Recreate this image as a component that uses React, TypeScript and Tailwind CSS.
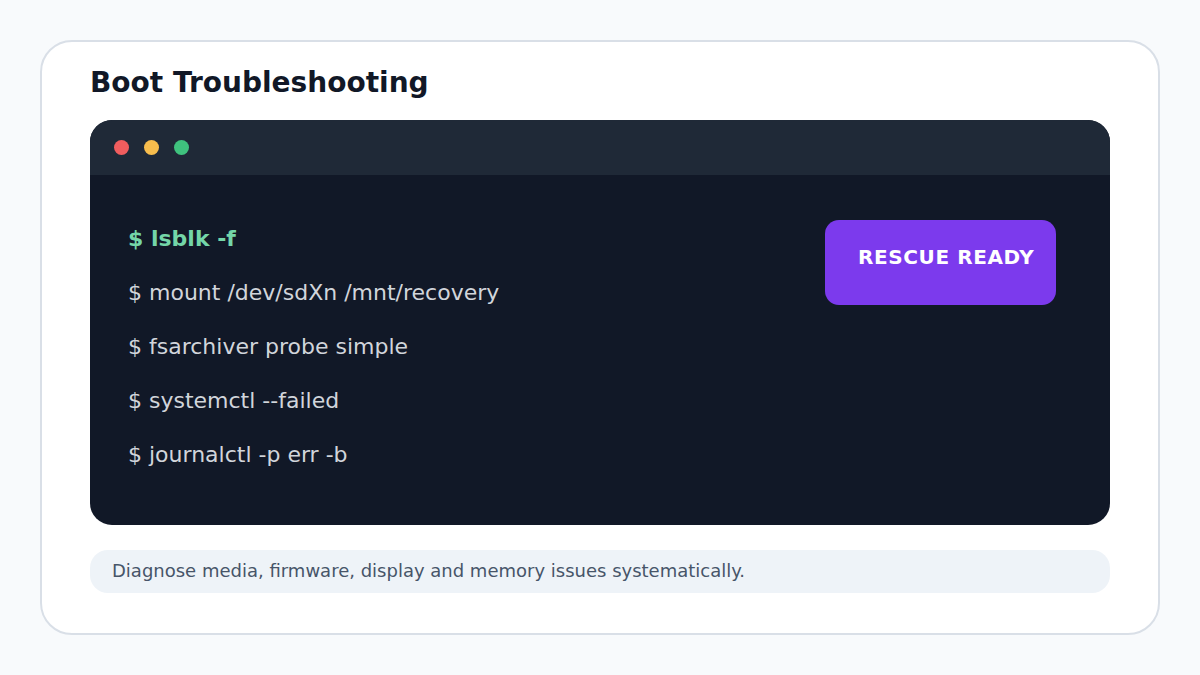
import React from "react";

const font = { fontFamily: '"DejaVu Sans", "Noto Sans", sans-serif' };

export default function App() {
  const cmds = [
    "$ mount /dev/sdXn /mnt/recovery",
    "$ fsarchiver probe simple",
    "$ systemctl --failed",
    "$ journalctl -p err -b",
  ];
  return (
    <div className="w-[1200px] h-[675px] bg-[#f8fafc] p-[40px]" style={font}>
      <div className="w-[1120px] h-[595px] bg-white border-2 border-[#d9dfe7] rounded-[32px] px-[48px] pt-[23px] flex flex-col">
        <h1 className="text-[28px] leading-[35px] font-bold text-[#111827] h-[35px]">
          Boot Troubleshooting
        </h1>
        <div className="mt-[20px] h-[405px] rounded-[22px] overflow-hidden bg-[#111827] flex flex-col">
          <div className="h-[55px] bg-[#1f2937] flex items-center gap-[15px] pl-[24px]">
            <span className="w-[15px] h-[15px] rounded-full bg-[#f05d5e]" />
            <span className="w-[15px] h-[15px] rounded-full bg-[#f7bd4d]" />
            <span className="w-[15px] h-[15px] rounded-full bg-[#3fc27e]" />
          </div>
          <div className="flex-1 flex justify-between items-start pt-[45px] pl-[38px] pr-[54px]">
            <div className="flex flex-col gap-[18px] text-[22px] leading-[36px] pt-[1px]">
              <div className="font-bold text-[#74d6a8]">$ lsblk -f</div>
              {cmds.map((c) => (
                <div key={c} className="text-[#d1d5db]">
                  {c}
                </div>
              ))}
            </div>
            <div className="w-[231px] h-[85px] rounded-[14px] bg-[#7c3aed] pl-[33px] pt-[22px]">
              <span className="text-[20px] leading-[30px] font-bold text-white tracking-[0.6px]">
                RESCUE READY
              </span>
            </div>
          </div>
        </div>
        <div className="mt-[25px] h-[43px] rounded-[18px] bg-[#eef3f8] flex items-center pl-[22px] pb-[3px]">
          <span className="text-[18px] text-[#475569]">
            Diagnose media, firmware, display and memory issues systematically.
          </span>
        </div>
      </div>
    </div>
  );
}
